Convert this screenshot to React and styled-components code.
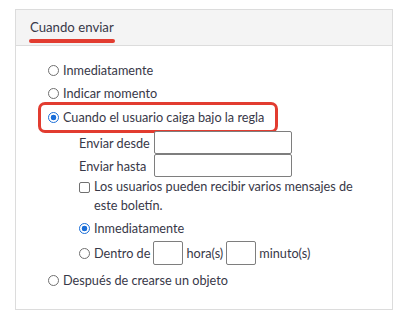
import React from 'react';
import styled, { createGlobalStyle } from 'styled-components';

const FONT = `Lato, "Liberation Sans", Arial, sans-serif`;
const TEXT = '#383848';
const RED = '#e23c30';
const BLUE = '#1a6ed8';

const GlobalStyle = createGlobalStyle`
  body {
    margin: 0;
    background: #fff;
    font-family: ${FONT};
    font-size: 12.7px;
    color: ${TEXT};
  }
`;

const Panel = styled.section`
  box-sizing: border-box;
  width: 378px;
  height: 301px;
  margin: 9px 0 0 15px;
  border: 1px solid #dcdcdc;
`;

const Header = styled.header`
  box-sizing: border-box;
  height: 36px;
  padding: 7px 0 0 14px;
  background: #f4f4f4;
  border-bottom: 1px solid #dcdcdc;
`;

const Title = styled.h2`
  position: relative;
  display: inline-block;
  margin: 0;
  font-size: 13.2px;
  font-weight: normal;
  line-height: 20px;

  &::after {
    content: '';
    position: absolute;
    left: -1px;
    right: -1px;
    bottom: -6px;
    height: 4px;
    border-radius: 2px;
    background: ${RED};
  }
`;

const Body = styled.div`
  display: flex;
  flex-direction: column;
  padding: 13px 0 0 32px;
`;

const Row = styled.label`
  display: flex;
  align-items: center;
  gap: ${p => p.$gap || 4}px;
  height: ${p => p.$h || 23}px;
  margin-top: ${p => p.$mt || 0}px;
  line-height: 19px;
  white-space: nowrap;
`;

const Highlight = styled.div`
  align-self: flex-start;
  display: flex;
  margin: -3px 0 -4px -10px;
  padding: 1px 11px 1px 7px;
  border: 3px solid ${RED};
  border-radius: 7px;
`;

const Radio = styled.input.attrs({ type: 'radio' })`
  appearance: none;
  box-sizing: border-box;
  flex: none;
  width: 11px;
  height: 11px;
  margin: 0 ${p => p.$after || 0}px 0 0;
  border: 1px solid #707070;
  border-radius: 50%;
  background: #fff;

  &:checked {
    border-color: ${BLUE};
    background: radial-gradient(circle, ${BLUE} 0 2.6px, #fff 3.1px);
  }
`;

const Checkbox = styled.input.attrs({ type: 'checkbox' })`
  appearance: none;
  box-sizing: border-box;
  flex: none;
  width: 11px;
  height: 11px;
  margin: 5px 0 0;
  border: 1px solid #707070;
  border-radius: 2px;
  background: #fff;
`;

const Sub = styled.div`
  display: flex;
  flex-direction: column;
  margin: 2px 0 0 31px;
`;

const Field = styled.div`
  display: grid;
  grid-template-columns: 75px 138px;
  align-items: center;
  height: 23px;
  white-space: nowrap;
`;

const TextBox = styled.input`
  box-sizing: border-box;
  width: ${p => p.$w || 138}px;
  height: ${p => p.$hh || 23}px;
  margin: 0;
  padding: 0 3px;
  border: 1px solid #7e7e7e;
  border-radius: 2px;
  font: inherit;
  background: #fff;
`;

const CheckRow = styled.label`
  display: flex;
  align-items: flex-start;
  gap: 4px;
  line-height: 19px;
`;

const CheckText = styled.span`
  width: 270px;
`;

export default function App() {
  return (
    <>
      <GlobalStyle />
      <Panel>
        <Header>
          <Title>Cuando enviar</Title>
        </Header>
        <Body>
          <Row>
            <Radio name="when" />
            Inmediatamente
          </Row>
          <Row>
            <Radio name="when" />
            Indicar momento
          </Row>
          <Highlight>
            <Row>
              <Radio name="when" defaultChecked />
              Cuando el usuario caiga bajo la regla
            </Row>
          </Highlight>
          <Sub>
            <Field>
              <span>Enviar desde</span>
              <TextBox />
            </Field>
            <Field>
              <span>Enviar hasta</span>
              <TextBox />
            </Field>
            <CheckRow>
              <Checkbox />
              <CheckText>Los usuarios pueden recibir varios mensajes de este boletín.</CheckText>
            </CheckRow>
            <Row $mt={2}>
              <Radio name="delay" defaultChecked />
              Inmediatamente
            </Row>
            <Row $h={26} $gap={3}>
              <Radio name="delay" $after={1} />
              Dentro de
              <TextBox $w={30} $hh={24} />
              hora(s)
              <TextBox $w={30} $hh={24} />
              minuto(s)
            </Row>
          </Sub>
          <Row $mt={3}>
            <Radio name="when" />
            Después de crearse un objeto
          </Row>
        </Body>
      </Panel>
    </>
  );
}
